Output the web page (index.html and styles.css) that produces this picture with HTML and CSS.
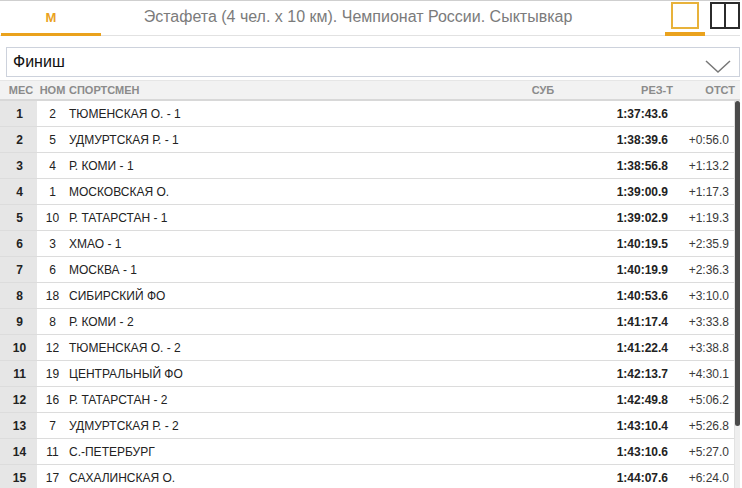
FILE: index.html
```html
<!DOCTYPE html>
<html lang="ru">
<head>
  <meta charset="UTF-8" />
  <title>Эстафета</title>
  <link rel="stylesheet" href="styles.css">
</head>
<body>
  <div class="page">
    <header class="topbar">
      <div class="tab active">М</div>
      <div class="title">Эстафета (4 чел. х 10 км). Чемпионат России. Сыктывкар</div>
      <div class="views">
        <div class="view active"><span class="box"></span></div>
        <div class="view"><span class="box split"></span></div>
      </div>
    </header>

    <div class="select">
      <span>Финиш</span>
      <svg class="chevron" width="26" height="14" viewBox="0 0 26 14"><path d="M1 1 L13 12 L25 1" fill="none" stroke="#777" stroke-width="1.5"/></svg>
    </div>

    <div class="thead">
      <div class="c-place">мес</div>
      <div class="c-num">ном</div>
      <div class="c-name">спортсмен</div>
      <div class="c-sub">суб</div>
      <div class="c-res">рез-т</div>
      <div class="c-gap">отст</div>
    </div>

    <div class="tbody">
      <div class="list" id="rows"></div>
      <div class="scrollbar"><div class="thumb"></div></div>
    </div>
  </div>

  <script>
    const rows = [
      [1, 2, "Тюменская О. - 1", "1:37:43.6", ""],
      [2, 5, "Удмуртская Р. - 1", "1:38:39.6", "+0:56.0"],
      [3, 4, "Р. Коми - 1", "1:38:56.8", "+1:13.2"],
      [4, 1, "Московская О.", "1:39:00.9", "+1:17.3"],
      [5, 10, "Р. Татарстан - 1", "1:39:02.9", "+1:19.3"],
      [6, 3, "ХМАО - 1", "1:40:19.5", "+2:35.9"],
      [7, 6, "Москва - 1", "1:40:19.9", "+2:36.3"],
      [8, 18, "Сибирский ФО", "1:40:53.6", "+3:10.0"],
      [9, 8, "Р. Коми - 2", "1:41:17.4", "+3:33.8"],
      [10, 12, "Тюменская О. - 2", "1:41:22.4", "+3:38.8"],
      [11, 19, "Центральный ФО", "1:42:13.7", "+4:30.1"],
      [12, 16, "Р. Татарстан - 2", "1:42:49.8", "+5:06.2"],
      [13, 7, "Удмуртская Р. - 2", "1:43:10.4", "+5:26.8"],
      [14, 11, "С.-Петербург", "1:43:10.6", "+5:27.0"],
      [15, 17, "Сахалинская О.", "1:44:07.6", "+6:24.0"]
    ];

    const list = document.getElementById("rows");
    rows.forEach(r => {
      const el = document.createElement("div");
      el.className = "row";
      el.innerHTML = `
        <div class="c-place">${r[0]}</div>
        <div class="c-num">${r[1]}</div>
        <div class="c-name">${r[2]}</div>
        <div class="c-sub"></div>
        <div class="c-res">${r[3]}</div>
        <div class="c-gap">${r[4]}</div>
      `;
      list.appendChild(el);
    });
  </script>
</body>
</html>
```

FILE: styles.css
```css
* { box-sizing: border-box; margin: 0; padding: 0; }
body { font-family: "Liberation Sans", Arial, sans-serif; background: #fff; color: #222; width: 742px; height: 488px; overflow: hidden; }
.page { display: flex; flex-direction: column; height: 488px; width: 740px; border-top: 1px solid #cfcfcf; }

.topbar { display: flex; align-items: stretch; height: 35px; border-bottom: 1px solid #e2e2e2; }
.tab { width: 100px; text-align: center; font-size: 13px; font-weight: bold; color: #eaa21d; padding-top: 9px; border-bottom: 3px solid #eaa21d; margin-left: 1px; margin-bottom: -1px; }
.title { flex: 1; text-align: center; font-size: 16px; color: #7b7b7b; padding-top: 7px; padding-right: 50px; }
.views { display: flex; gap: 5px; }
.view { display: flex; justify-content: center; padding-top: 1px; }
.view.active { width: 40px; border-bottom: 4px solid #eaa21d; margin-bottom: -1px; }
.box { width: 28px; height: 27px; border: 2px solid #e8b23a; display: block; }
.box.split { width: 30px; border-color: #2b2b2b; background: linear-gradient(#2b2b2b, #2b2b2b) center / 2px 100% no-repeat; }

.select { margin: 11px 0 0 6px; height: 30px; border: 1px solid #cdd2dc; display: flex; align-items: center; justify-content: space-between; padding: 0 8px 0 6px; font-size: 16px; color: #111; }
.chevron { margin-top: 9px; }

.thead, .row { display: grid; align-items: center; }
.thead { grid-template-columns: 37px 31px 1fr 80px 90px 67px; margin-top: 3px; height: 21px; background: #f2f2f2; border-top: 1px solid #e6e6e6; border-bottom: 2px solid #d8d8d8; font-size: 11px; font-weight: bold; color: #8b8b8b; text-transform: uppercase; }
.thead .c-place { text-align: center; padding-left: 5px; }

.tbody { flex: 1; display: flex; min-height: 0; }
.list { flex: 1 1 0; min-width: 0; overflow: hidden; }
.scrollbar { flex: 0 0 6px; width: 6px; background: #eeeeee; border-left: 1px solid #e2e2e2; }
.thumb { width: 5px; height: 325px; background: #4a4a4a; border-radius: 3px; }

.row { grid-template-columns: 37px 31px minmax(0, 1fr) 80px 90px 66px; height: 26px; border-bottom: 1px solid #dcdcdc; font-size: 12px; color: #222; }
.row .c-place { background: #e6e6e6; height: 100%; display: flex; align-items: center; justify-content: center; padding-left: 2px; font-weight: bold; }
.c-num { text-align: center; }
.c-name { padding-left: 1px; text-transform: uppercase; white-space: nowrap; }
.c-sub { text-align: center; }
.c-res { text-align: right; font-weight: bold; }
.c-gap { text-align: right; padding-right: 5px; }
.row .c-gap { color: #3a3a3a; }
```
